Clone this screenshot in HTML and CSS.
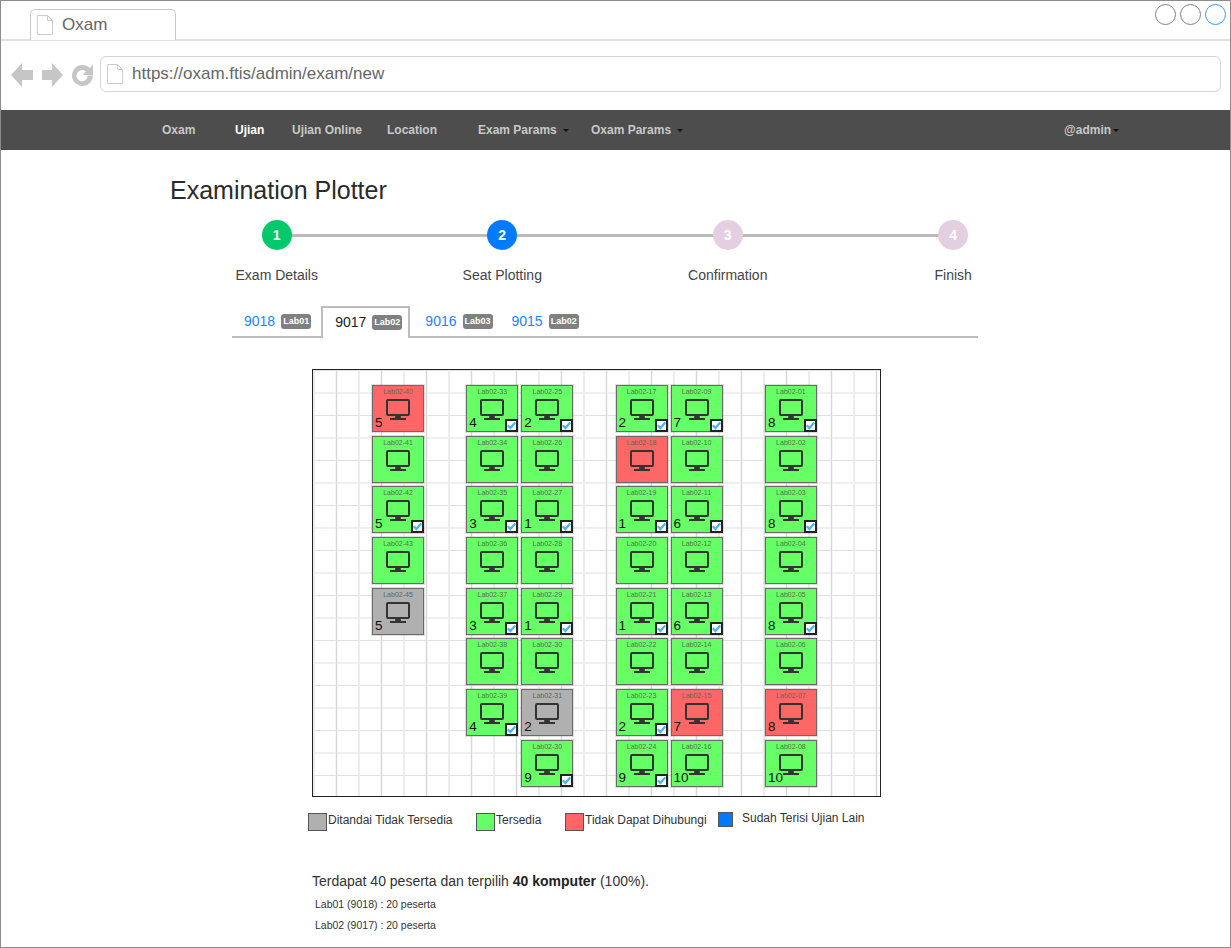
FILE: index.html
```html
<!DOCTYPE html>
<html lang="id">
<head>
<meta charset="utf-8">
<title>Oxam</title>
<link rel="stylesheet" href="styles.css">
</head>
<body>
<svg class="defs" width="0" height="0" aria-hidden="true">
  <symbol id="mon" viewBox="0 0 24 22">
    <rect x="1" y="1" width="22" height="15" rx="1" fill="none" stroke="#333" stroke-width="2"/>
    <path d="M9.5 16h5l.5 3.500H9z" fill="#333"/>
    <rect x="4" y="19" width="16" height="2" fill="#333"/>
  </symbol>
  <symbol id="tick" viewBox="0 0 9 9">
    <path d="M.8 4.300 3.400 7 8.200 1.400" fill="none" stroke="#45b6f2" stroke-width="2.200"/>
  </symbol>
  <symbol id="doc" viewBox="0 0 16 20">
    <path d="M.5.5h10l5 5v14H.5zM10.500.5v5h5" fill="#fff" stroke="#ccc"/>
  </symbol>
</svg>
<div class="window">
  <header class="tabbar">
    <div class="tab"><svg class="doc"><use href="#doc"/></svg><span>Oxam</span></div>
    <div class="winbtns"><i class="winbtn"></i><i class="winbtn"></i><i class="winbtn winbtn-on"></i></div>
  </header>
  <div class="urlbar">
    <svg class="navicons" width="84" height="26" viewBox="0 0 84 26">
      <path d="M0 13 11 1v7h11v10H11v7z" fill="#c6c6c6"/>
      <path d="M52 13 41 1v7H31v10h10v7z" fill="#c6c6c6"/>
      <path d="M82 13.500a10.500 10.500 0 1 1-3.200-7.600L82 2.500v10.500H71.500l3.400-3.400a5.600 5.600 0 1 0 1.800 3.900z" fill="#c6c6c6"/>
    </svg>
    <div class="address"><svg class="doc"><use href="#doc"/></svg><span>https://oxam.ftis/admin/exam/new</span></div>
  </div>
  <nav class="nav">
    <a class="nav-oxam">Oxam</a>
    <a class="nav-ujian active">Ujian</a>
    <a class="nav-online">Ujian Online</a>
    <a class="nav-loc">Location</a>
    <a class="nav-exam caret">Exam Params</a>
    <a class="nav-params caret">Oxam Params</a>
    <a class="nav-admin caret">@admin</a>
  </nav>
  <main class="content">
    <h1 class="title">Examination Plotter</h1>
    <ol class="steps">
      <li class="step"><b class="dot dot-done">1</b><span>Exam Details</span></li>
      <li class="step"><b class="dot dot-now">2</b><span>Seat Plotting</span></li>
      <li class="step"><b class="dot">3</b><span>Confirmation</span></li>
      <li class="step"><b class="dot">4</b><span>Finish</span></li>
    </ol>
    <div class="tabs">
      <a class="pill">9018 <em>Lab01</em></a>
      <a class="pill pill-active">9017 <em>Lab02</em></a>
      <a class="pill">9016 <em>Lab03</em></a>
      <a class="pill">9015 <em>Lab02</em></a>
    </div>
    <section class="plot">
      <div class="block">
        <div class="col">
          <div class="seat red"><small>Lab02-40</small><svg class="mon"><use href="#mon"/></svg><span class="num">5</span></div>
          <div class="seat"><small>Lab02-41</small><svg class="mon"><use href="#mon"/></svg></div>
          <div class="seat"><small>Lab02-42</small><svg class="mon"><use href="#mon"/></svg><span class="num">5</span><svg class="chk"><use href="#tick"/></svg></div>
          <div class="seat"><small>Lab02-43</small><svg class="mon"><use href="#mon"/></svg></div>
          <div class="seat gray"><small>Lab02-45</small><svg class="mon"><use href="#mon"/></svg><span class="num">5</span></div>
        </div>
      </div>
      <div class="block">
        <div class="col">
          <div class="seat"><small>Lab02-33</small><svg class="mon"><use href="#mon"/></svg><span class="num">4</span><svg class="chk"><use href="#tick"/></svg></div>
          <div class="seat"><small>Lab02-34</small><svg class="mon"><use href="#mon"/></svg></div>
          <div class="seat"><small>Lab02-35</small><svg class="mon"><use href="#mon"/></svg><span class="num">3</span><svg class="chk"><use href="#tick"/></svg></div>
          <div class="seat"><small>Lab02-36</small><svg class="mon"><use href="#mon"/></svg></div>
          <div class="seat"><small>Lab02-37</small><svg class="mon"><use href="#mon"/></svg><span class="num">3</span><svg class="chk"><use href="#tick"/></svg></div>
          <div class="seat"><small>Lab02-38</small><svg class="mon"><use href="#mon"/></svg></div>
          <div class="seat"><small>Lab02-39</small><svg class="mon"><use href="#mon"/></svg><span class="num">4</span><svg class="chk"><use href="#tick"/></svg></div>
        </div>
        <div class="col">
          <div class="seat"><small>Lab02-25</small><svg class="mon"><use href="#mon"/></svg><span class="num">2</span><svg class="chk"><use href="#tick"/></svg></div>
          <div class="seat"><small>Lab02-26</small><svg class="mon"><use href="#mon"/></svg></div>
          <div class="seat"><small>Lab02-27</small><svg class="mon"><use href="#mon"/></svg><span class="num">1</span><svg class="chk"><use href="#tick"/></svg></div>
          <div class="seat"><small>Lab02-28</small><svg class="mon"><use href="#mon"/></svg></div>
          <div class="seat"><small>Lab02-29</small><svg class="mon"><use href="#mon"/></svg><span class="num">1</span><svg class="chk"><use href="#tick"/></svg></div>
          <div class="seat"><small>Lab02-30</small><svg class="mon"><use href="#mon"/></svg></div>
          <div class="seat gray"><small>Lab02-31</small><svg class="mon"><use href="#mon"/></svg><span class="num">2</span></div>
          <div class="seat"><small>Lab02-30</small><svg class="mon"><use href="#mon"/></svg><span class="num">9</span><svg class="chk"><use href="#tick"/></svg></div>
        </div>
      </div>
      <div class="block">
        <div class="col">
          <div class="seat"><small>Lab02-17</small><svg class="mon"><use href="#mon"/></svg><span class="num">2</span><svg class="chk"><use href="#tick"/></svg></div>
          <div class="seat red"><small>Lab02-18</small><svg class="mon"><use href="#mon"/></svg></div>
          <div class="seat"><small>Lab02-19</small><svg class="mon"><use href="#mon"/></svg><span class="num">1</span><svg class="chk"><use href="#tick"/></svg></div>
          <div class="seat"><small>Lab02-20</small><svg class="mon"><use href="#mon"/></svg></div>
          <div class="seat"><small>Lab02-21</small><svg class="mon"><use href="#mon"/></svg><span class="num">1</span><svg class="chk"><use href="#tick"/></svg></div>
          <div class="seat"><small>Lab02-22</small><svg class="mon"><use href="#mon"/></svg></div>
          <div class="seat"><small>Lab02-23</small><svg class="mon"><use href="#mon"/></svg><span class="num">2</span><svg class="chk"><use href="#tick"/></svg></div>
          <div class="seat"><small>Lab02-24</small><svg class="mon"><use href="#mon"/></svg><span class="num">9</span><svg class="chk"><use href="#tick"/></svg></div>
        </div>
        <div class="col">
          <div class="seat"><small>Lab02-09</small><svg class="mon"><use href="#mon"/></svg><span class="num">7</span><svg class="chk"><use href="#tick"/></svg></div>
          <div class="seat"><small>Lab02-10</small><svg class="mon"><use href="#mon"/></svg></div>
          <div class="seat"><small>Lab02-11</small><svg class="mon"><use href="#mon"/></svg><span class="num">6</span><svg class="chk"><use href="#tick"/></svg></div>
          <div class="seat"><small>Lab02-12</small><svg class="mon"><use href="#mon"/></svg></div>
          <div class="seat"><small>Lab02-13</small><svg class="mon"><use href="#mon"/></svg><span class="num">6</span><svg class="chk"><use href="#tick"/></svg></div>
          <div class="seat"><small>Lab02-14</small><svg class="mon"><use href="#mon"/></svg></div>
          <div class="seat red"><small>Lab02-15</small><svg class="mon"><use href="#mon"/></svg><span class="num">7</span></div>
          <div class="seat"><small>Lab02-16</small><svg class="mon"><use href="#mon"/></svg><span class="num">10</span></div>
        </div>
      </div>
      <div class="block">
        <div class="col">
          <div class="seat"><small>Lab02-01</small><svg class="mon"><use href="#mon"/></svg><span class="num">8</span><svg class="chk"><use href="#tick"/></svg></div>
          <div class="seat"><small>Lab02-02</small><svg class="mon"><use href="#mon"/></svg></div>
          <div class="seat"><small>Lab02-03</small><svg class="mon"><use href="#mon"/></svg><span class="num">8</span><svg class="chk"><use href="#tick"/></svg></div>
          <div class="seat"><small>Lab02-04</small><svg class="mon"><use href="#mon"/></svg></div>
          <div class="seat"><small>Lab02-05</small><svg class="mon"><use href="#mon"/></svg><span class="num">8</span><svg class="chk"><use href="#tick"/></svg></div>
          <div class="seat"><small>Lab02-06</small><svg class="mon"><use href="#mon"/></svg></div>
          <div class="seat red"><small>Lab02-07</small><svg class="mon"><use href="#mon"/></svg><span class="num">8</span></div>
          <div class="seat"><small>Lab02-08</small><svg class="mon"><use href="#mon"/></svg><span class="num">10</span></div>
        </div>
      </div>
    </section>
    <ul class="legend">
      <li class="key"><i class="swatch sw-gray"></i>Ditandai Tidak Tersedia</li>
      <li class="key"><i class="swatch sw-green"></i>Tersedia</li>
      <li class="key"><i class="swatch sw-red"></i>Tidak Dapat Dihubungi</li>
      <li class="key key-blue"><i class="swatch sw-blue"></i>Sudah Terisi Ujian Lain</li>
    </ul>
    <div class="summary">
      <p class="sum-main">Terdapat 40 peserta dan terpilih <strong>40 komputer</strong> (100%).</p>
      <p class="sum-line">Lab01 (9018) : 20 peserta</p>
      <p class="sum-line">Lab02 (9017) : 20 peserta</p>
    </div>
  </main>
</div>
</body>
</html>
```
FILE: styles.css
```css
* { box-sizing: border-box; }
html, body { margin: 0; padding: 0; }
body { font-family: "Liberation Sans", Arial, sans-serif; color: #222; background: #fff; }
.defs { position: absolute; }
.window { width: 1231px; height: 948px; border: 1px solid #8c8c8c; overflow: hidden; display: flex; flex-direction: column; }

.tabbar { height: 40px; flex: none; display: flex; justify-content: space-between; padding-left: 29px; border-bottom: 2px solid #e0e0e0; }
.tab { width: 146px; height: 31px; margin-top: 8px; display: flex; align-items: center; gap: 9px; padding-left: 6px; background: #fff; border: 1px solid #c8c8c8; border-bottom: 0; border-radius: 5px 5px 0 0; font-size: 17px; color: #666; }
.doc { width: 16px; height: 20px; flex: none; }
.winbtns { display: flex; gap: 4px; margin: 3px 4px 0 0; }
.winbtn { width: 21px; height: 21px; border: 1px solid #808080; border-radius: 50%; }
.winbtn-on { border-color: #2f9bff; }

.urlbar { height: 69px; flex: none; display: flex; align-items: center; gap: 5px; padding: 0 9px 4px 10px; }
.navicons { flex: none; margin-top: 2px; }
.address { flex: 1; height: 36px; display: flex; align-items: center; gap: 9px; padding-left: 6px; border: 1px solid #d4d4d4; border-radius: 6px; font-size: 17px; color: #666; }

.nav { height: 40px; flex: none; background: #4d4d4d; display: flex; align-items: center; padding-left: 161px; font-size: 12px; font-weight: bold; color: #c8c8c8; }
.nav a { display: block; }
.nav-oxam { width: 73px; }
.nav-ujian { width: 57px; }
.nav-online { width: 95px; }
.nav-loc { width: 91px; }
.nav-exam { width: 113px; }
.nav-params { width: 473px; }
.active { color: #fff; }
.caret::after { content: ""; display: inline-block; margin-left: 6px; vertical-align: 2px; border: 3px solid transparent; border-top-color: #111; border-bottom: 0; }
.nav-admin.caret::after { margin-left: 2px; }

.content { flex: 1; min-height: 0; display: flex; flex-direction: column; }
.title { margin: 25px 0 0 169px; font-size: 25px; line-height: 30px; font-weight: normal; color: #2a2a2a; }
.steps { list-style: none; margin: 15px 0 0 163px; padding: 0; display: flex; position: relative; width: 902px; }
.steps::before { content: ""; position: absolute; left: 113px; right: 113px; top: 14px; height: 3px; background: #bbb; }
.step { width: 225.500px; flex: none; display: flex; flex-direction: column; align-items: center; gap: 17px; font-size: 14px; color: #444; position: relative; }
.dot { width: 30px; height: 30px; border-radius: 50%; background: #e3cfdf; color: #fff; font-size: 14px; display: flex; align-items: center; justify-content: center; }
.dot-done { background: #00c96b; }
.dot-now { background: #007bff; }

.tabs { margin: 23px 0 0 231px; width: 746px; height: 32px; display: flex; border-bottom: 2px solid #bdbdbd; }
.pill { display: flex; align-items: center; gap: 6px; height: 30px; padding: 0 7px 0 12px; font-size: 14px; color: #1a85ff; }
.pill em { font-style: normal; font-weight: bold; font-size: 9px; color: #fff; background: #808080; border-radius: 3px; padding: 0 2px; line-height: 15px; }
.pill-active { color: #222; background: #fff; border: 2px solid #bdbdbd; border-bottom: 0; height: 32px; padding: 0 6px 2px 12px; margin: 0 3px 0 3px; }

.plot { margin: 31px 0 0 311px; width: 569px; height: 428px; border: 1px solid #222; padding: 15px 0 0 59px; display: flex; gap: 42.300px; background-color: #fff;
  background-image: linear-gradient(90deg, #d8d8d8 1px, transparent 1px), linear-gradient(90deg, #ececec 2px, transparent 2px), linear-gradient(180deg, #e0e0e0 1px, transparent 1px); background-size: 45px 100%, 22.500px 100%, 100% 22.500px; background-position: 23px 0, 0 0, 0 0; }
.block { display: flex; gap: 3px; }
.col { width: 52px; display: flex; flex-direction: column; gap: 3.700px; }
.seat { height: 47px; position: relative; flex: none; background: #66ff66; border: 1px solid #6a6a6a; box-shadow: 0 0 0 1px rgba(110, 110, 110, .22); display: flex; flex-direction: column; align-items: center; }
.seat small { font-size: 7px; line-height: 9px; margin-top: 1px; color: #5a6a5a; }
.seat.red { background: #ff6666; }
.seat.gray { background: #b0b0b0; }
.mon { width: 24px; height: 22px; margin-top: 3px; }
.num { position: absolute; left: 2px; bottom: 1px; font-size: 13.500px; line-height: 14px; color: #111; }
.chk { position: absolute; right: -1px; bottom: -1px; width: 13px; height: 13px; background: #fff; border: 2px solid #222; }

.legend { list-style: none; margin: 16px 0 0 307px; padding: 0; display: flex; font-size: 12px; line-height: 14px; color: #333; }
.key { display: flex; align-items: flex-start; height: 19px; }
.key:nth-child(1) { width: 168px; }
.key:nth-child(2) { width: 89px; }
.key:nth-child(3) { width: 153px; }
.key-blue { margin-top: -1px; line-height: 13px; }
.swatch { flex: none; width: 19px; height: 18px; margin-right: 1px; border: 1px solid #555; }
.sw-gray { background: #b0b0b0; }
.sw-green { background: #66ff66; }
.sw-red { background: #ff6666; }
.sw-blue { width: 15px; height: 15px; background: #007bff; margin-right: 9px; }

.summary { margin: 41px 0 0 311px; }
.sum-main { margin: 0 0 8px; font-size: 14px; line-height: 17px; color: #333; }
.sum-line { margin: 0 0 9px 3px; font-size: 10.500px; line-height: 12px; color: #333; }
.sum-main strong { color: #222; }
```
